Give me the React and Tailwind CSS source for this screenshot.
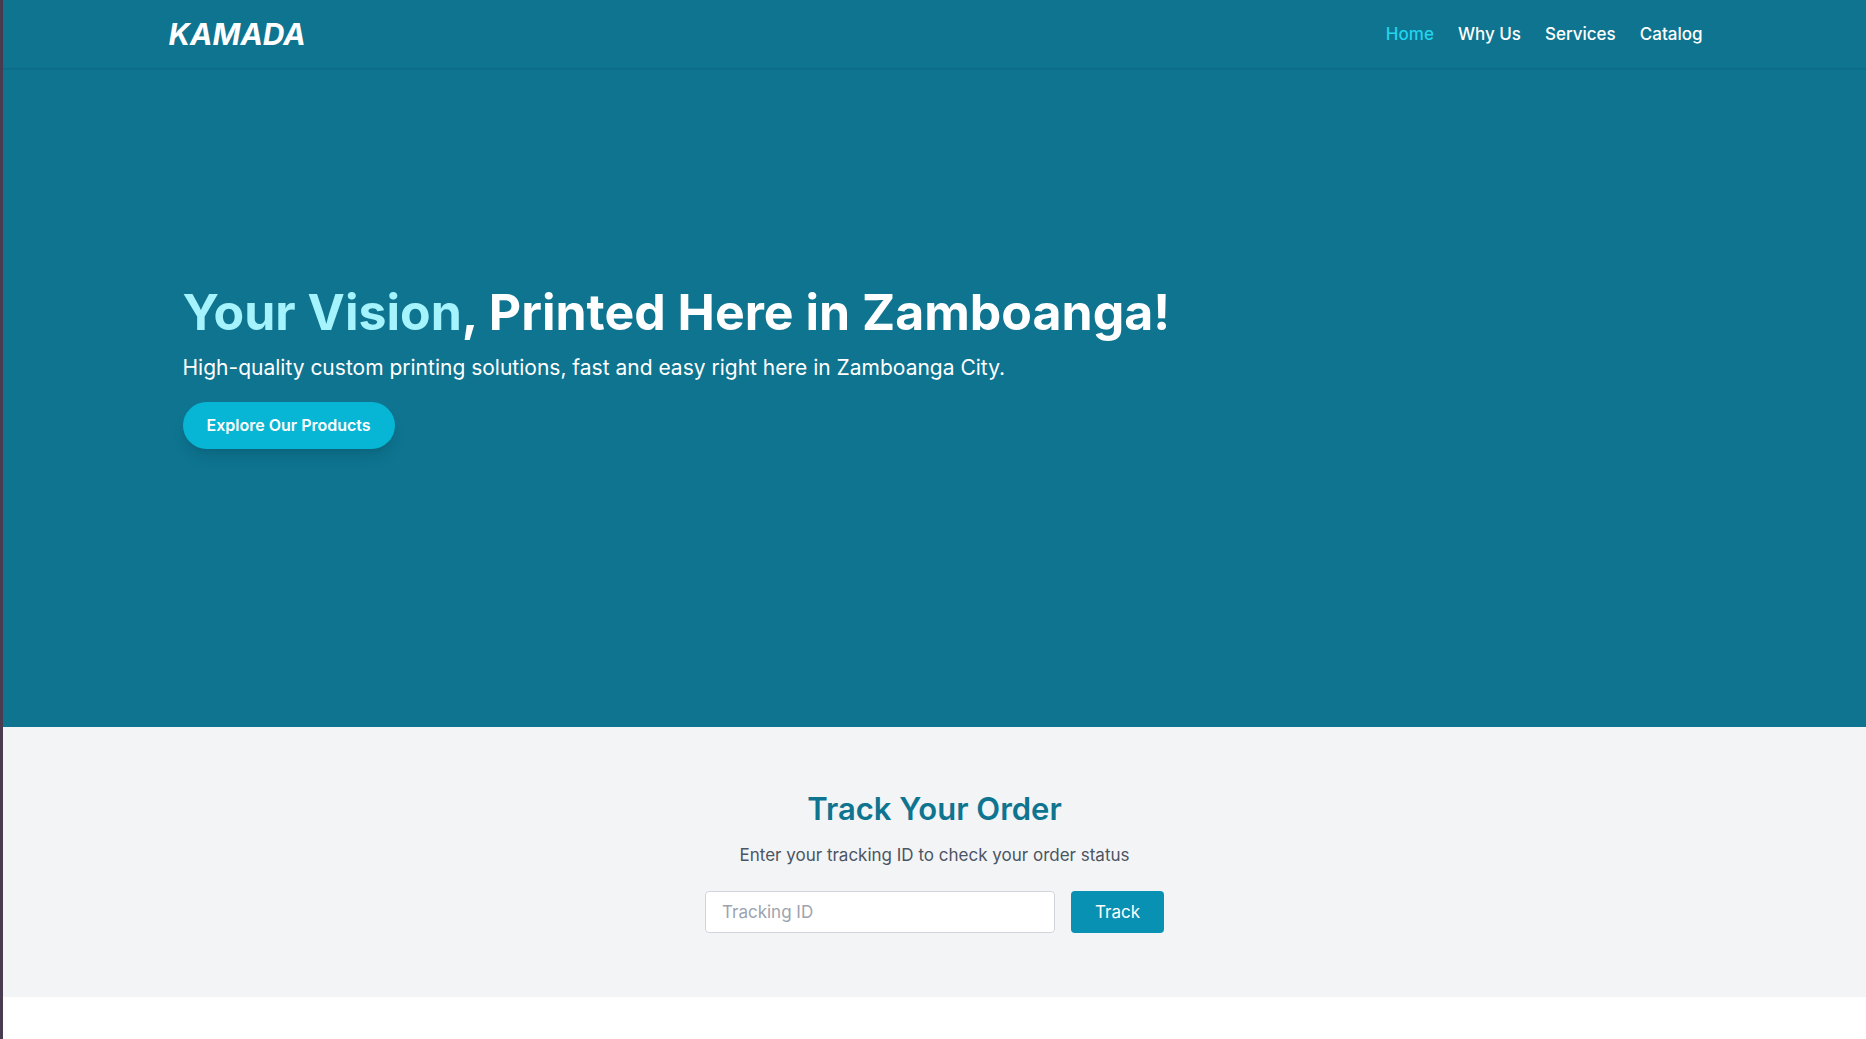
const links = [
  { label: "Home", href: "#home", active: true },
  { label: "Why Us", href: "#why-us" },
  { label: "Services", href: "#services" },
  { label: "Catalog", href: "#catalog" },
];

function Header() {
  return (
    <header className="relative z-10 bg-[#0e7490] text-white shadow-[0_1px_2px_rgba(0,0,0,0.12)]">
      <div className="mx-auto flex max-w-screen-2xl items-center justify-between py-4">
        <a href="#home" className="pl-0.5 text-3xl leading-9 font-bold italic">
          KAMADA
        </a>
        <nav className="flex gap-6 text-[17px] leading-6">
          {links.map((link) => (
            <a
              key={link.label}
              href={link.href}
              className={link.active ? "font-medium text-[#22d3ee]" : "font-medium"}
            >
              {link.label}
            </a>
          ))}
        </nav>
      </div>
    </header>
  );
}

function Hero() {
  return (
    <section id="home" className="h-[659px] bg-[#0e7490] pt-[214px] text-white">
      <div className="mx-auto max-w-screen-2xl px-4">
        <h1 className="mb-3 text-[50px] leading-15 font-bold">
          <span className="text-[#a5f3fc]">Your Vision</span>, Printed Here in Zamboanga!
        </h1>
        <p className="mb-5 text-[21px] leading-7">
          High-quality custom printing solutions, fast and easy right here in Zamboanga City.
        </p>
        <button
          type="button"
          className="rounded-full bg-[#06b6d4] px-6 py-3 leading-[23px] font-semibold shadow-lg"
        >
          Explore Our Products
        </button>
      </div>
    </section>
  );
}

function TrackOrder() {
  return (
    <section className="bg-[#f3f4f6] px-4 py-16 text-center text-[17px] leading-6">
      <h2 className="mb-4 text-[31px] leading-9 font-semibold text-[#0e7490]">Track Your Order</h2>
      <p className="mb-6 text-[#4b5563]">Enter your tracking ID to check your order status</p>
      <form className="flex justify-center gap-4" onSubmit={(e) => e.preventDefault()}>
        <input
          type="text"
          aria-label="Tracking ID"
          placeholder="Tracking ID"
          className="w-[350px] rounded border border-[#d1d5db] bg-white px-4 py-2 placeholder:text-[#9ca3af]"
        />
        <button type="submit" className="rounded bg-[#0891b2] px-6 py-2 text-white">
          Track
        </button>
      </form>
    </section>
  );
}

export default function App() {
  return (
    <div className="min-h-screen border-l-3 border-[#493c51] bg-white font-[Inter,sans-serif]">
      <Header />
      <main>
        <Hero />
        <TrackOrder />
      </main>
    </div>
  );
}
